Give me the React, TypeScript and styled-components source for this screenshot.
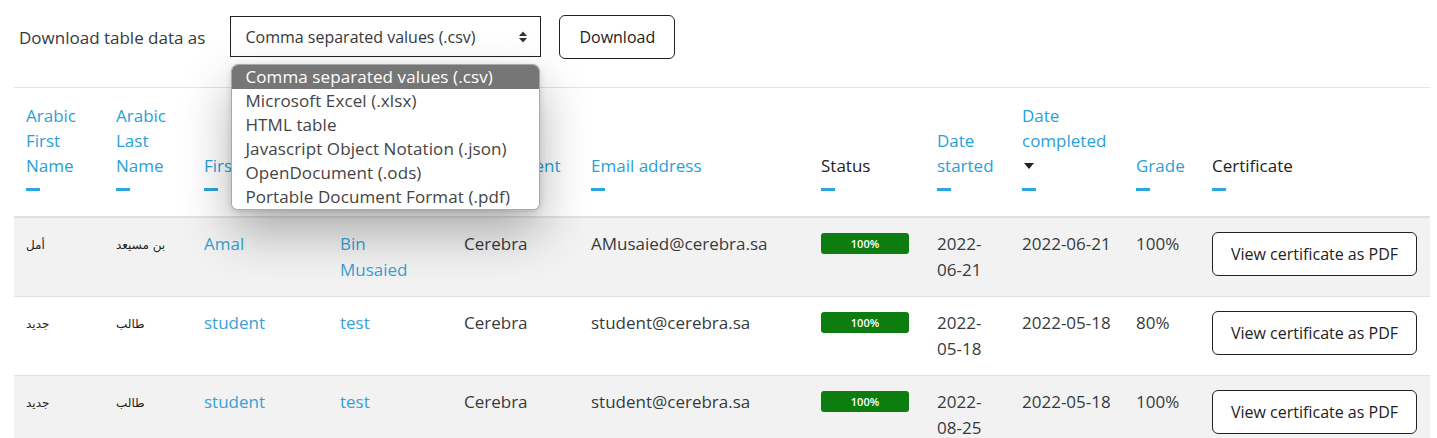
import React from "react";
import styled, { createGlobalStyle } from "styled-components";

const Global = createGlobalStyle`
  html, body { margin: 0; padding: 0; background: #fff; }
  body { font-family: "Open Sans", "Noto Sans", sans-serif; color: #373a3c; }
  * { box-sizing: border-box; }
`;

const Page = styled.div`
  padding: 0 7px 0 14px;
`;

const Toolbar = styled.div`
  display: flex;
  align-items: flex-start;
  height: 87px;
  padding: 15px 0 0 5px;
`;

const Label = styled.span`
  margin-top: 11px;
  margin-right: 25px;
  font-size: 17px;
  color: #373a3c;
`;

const SelectWrap = styled.div`
  position: relative;
  margin-right: 18px;
  margin-top: 1px;
`;

const SelectBox = styled.div`
  width: 311px;
  height: 41px;
  border: 1px solid #222;
  display: flex;
  align-items: center;
  justify-content: space-between;
  padding: 0 12px 0 14px;
  font-size: 16px;
  color: #373a3c;
`;

const Menu = styled.div`
  position: absolute;
  left: 1px;
  top: 48px;
  width: 309px;
  background: #fff;
  border: 1px solid #a9a9a9;
  border-radius: 7px;
  overflow: hidden;
  box-shadow: 0 22px 50px rgba(0, 0, 0, 0.3), 0 2px 6px rgba(0, 0, 0, 0.15);
  z-index: 10;
`;

const Option = styled.div<{ $active?: boolean }>`
  height: 24px;
  line-height: 23px;
  padding-left: 13px;
  font-size: 17px;
  letter-spacing: 0.1px;
  white-space: nowrap;
  background: ${(p) => (p.$active ? "#767676" : "#fff")};
  color: ${(p) => (p.$active ? "#fff" : "#444")};
`;

const Button = styled.button`
  font-family: inherit;
  font-size: 16px;
  color: #222;
  background: #fff;
  border: 1px solid #222;
  border-radius: 6px;
  height: 44px;
  padding: 0 19px;
  white-space: nowrap;
`;

const Table = styled.table`
  width: 1416px;
  border-collapse: collapse;
  table-layout: fixed;
  font-size: 17px;
`;

const Th = styled.th<{ $link?: boolean }>`
  text-align: left;
  vertical-align: bottom;
  font-weight: 500;
  font-size: 17px;
  line-height: 25px;
  padding: 15px 12px 25px 12px;
  color: ${(p) => (p.$link ? "#2a9fd8" : "#222")};
  border-top: 1px solid #e3e3e3;
  border-bottom: 2px solid #dee2e6;
`;

const HeadText = styled.div``;

const Dash = styled.div`
  width: 14px;
  height: 3px;
  background: #2aa7e0;
  margin-top: 10px;
`;

const CaretLine = styled.div`
  height: 25px;
  display: flex;
  align-items: center;
  padding-left: 2px;
`;

const Caret = styled.div`
  width: 0;
  height: 0;
  border-left: 5px solid transparent;
  border-right: 5px solid transparent;
  border-top: 6px solid #222;
`;

const Tr = styled.tr<{ $shade?: boolean }>`
  background: ${(p) => (p.$shade ? "#f2f2f2" : "#fff")};
  border-bottom: 1px solid #dee2e6;
`;

const Td = styled.td<{ $wrapNarrow?: boolean }>`
  vertical-align: top;
  padding: 13px ${(p) => (p.$wrapNarrow ? "30px" : "12px")} 13px 12px;
  line-height: 26px;
  color: #373a3c;
`;

const ArabicTd = styled(Td)`
  font-family: "DejaVu Sans", sans-serif;
  font-size: 12px;
  color: #222;
  padding-top: 14px;
`;

const LinkText = styled.span`
  color: #3a9fd5;
`;

const Badge = styled.div`
  width: 88px;
  height: 21px;
  margin-top: 2px;
  background: #0e7d10;
  border-radius: 3px;
  color: #fff;
  font-size: 11px;
  font-weight: 600;
  line-height: 21px;
  text-align: center;
`;

const CertButton = styled(Button)`
  height: 44px;
  padding: 0 18px;
  margin-top: 1px;
`;

const SortIcon = () => (
  <svg width="10" height="14" viewBox="0 0 10 14">
    <path d="M1 6 L5 1.5 L9 6 Z" fill="#333" />
    <path d="M1 8 L5 12.5 L9 8 Z" fill="#333" />
  </svg>
);

const options = [
  "Comma separated values (.csv)",
  "Microsoft Excel (.xlsx)",
  "HTML table",
  "Javascript Object Notation (.json)",
  "OpenDocument (.ods)",
  "Portable Document Format (.pdf)",
];

const widths = [90, 88, 136, 124, 127, 230, 116, 85, 114, 76, 230];

const headers: { text: string; link: boolean; caret?: boolean }[] = [
  { text: "Arabic First Name", link: true },
  { text: "Arabic Last Name", link: true },
  { text: "First name", link: true },
  { text: "Last name", link: true },
  { text: "Department", link: true },
  { text: "Email address", link: true },
  { text: "Status", link: false },
  { text: "Date started", link: true },
  { text: "Date completed", link: true, caret: true },
  { text: "Grade", link: true },
  { text: "Certificate", link: false },
];

const rows = [
  { af: "أمل", al: "بن مسيعد", first: "Amal", last: "Bin Musaied", dept: "Cerebra", email: "AMusaied@cerebra.sa", started: "2022-06-21", completed: "2022-06-21", grade: "100%" },
  { af: "جديد", al: "طالب", first: "student", last: "test", dept: "Cerebra", email: "student@cerebra.sa", started: "2022-05-18", completed: "2022-05-18", grade: "80%" },
  { af: "جديد", al: "طالب", first: "student", last: "test", dept: "Cerebra", email: "student@cerebra.sa", started: "2022-08-25", completed: "2022-05-18", grade: "100%" },
];

export default function App() {
  return (
    <Page>
      <Global />
      <Toolbar>
        <Label>Download table data as</Label>
        <SelectWrap>
          <SelectBox>
            <span>Comma separated values (.csv)</span>
            <SortIcon />
          </SelectBox>
          <Menu>
            {options.map((o, i) => (
              <Option key={o} $active={i === 0}>
                {o}
              </Option>
            ))}
          </Menu>
        </SelectWrap>
        <Button>Download</Button>
      </Toolbar>
      <Table>
        <colgroup>
          {widths.map((w, i) => (
            <col key={i} style={{ width: w }} />
          ))}
        </colgroup>
        <thead>
          <tr>
            {headers.map((h) => (
              <Th key={h.text} $link={h.link}>
                <HeadText>{h.text}</HeadText>
                {h.caret && (
                  <CaretLine>
                    <Caret />
                  </CaretLine>
                )}
                <Dash />
              </Th>
            ))}
          </tr>
        </thead>
        <tbody>
          {rows.map((r, i) => (
            <Tr key={i} $shade={i % 2 === 0}>
              <ArabicTd>{r.af}</ArabicTd>
              <ArabicTd>{r.al}</ArabicTd>
              <Td><LinkText>{r.first}</LinkText></Td>
              <Td $wrapNarrow><LinkText>{r.last}</LinkText></Td>
              <Td>{r.dept}</Td>
              <Td>{r.email}</Td>
              <Td><Badge>100%</Badge></Td>
              <Td>{r.started}</Td>
              <Td>{r.completed}</Td>
              <Td>{r.grade}</Td>
              <Td><CertButton>View certificate as PDF</CertButton></Td>
            </Tr>
          ))}
        </tbody>
      </Table>
    </Page>
  );
}
